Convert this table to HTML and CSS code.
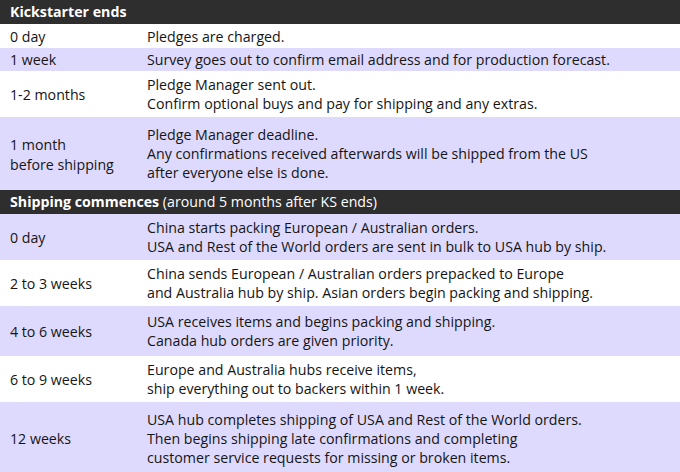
FILE: index.html
```html
<!DOCTYPE html>
<html lang="en">
<head>
<meta charset="utf-8">
<title>Kickstarter timeline</title>
<link rel="stylesheet" href="styles.css">
</head>
<body>
<div class="timeline">
  <div class="head"><b>Kickstarter ends</b></div>
  <div class="row p1"><div class="when">0 day</div><div class="what">Pledges are charged.</div></div>
  <div class="row alt p1b"><div class="when">1 week</div><div class="what">Survey goes out to confirm email address and for production forecast.</div></div>
  <div class="row p2"><div class="when">1-2 months</div><div class="what">Pledge Manager sent out.<br>Confirm optional buys and pay for shipping and any extras.</div></div>
  <div class="row alt p3"><div class="when tall">1 month<br>before shipping</div><div class="what">Pledge Manager deadline.<br>Any confirmations received afterwards will be shipped from the US<br>after everyone else is done.</div></div>
  <div class="head"><b>Shipping commences</b> (around 5 months after KS ends)</div>
  <div class="row alt p2"><div class="when">0 day</div><div class="what">China starts packing European / Australian orders.<br>USA and Rest of the World orders are sent in bulk to USA hub by ship.</div></div>
  <div class="row p2"><div class="when">2 to 3 weeks</div><div class="what">China sends European / Australian orders prepacked to Europe<br>and Australia hub by ship. Asian orders begin packing and shipping.</div></div>
  <div class="row alt p2w"><div class="when">4 to 6 weeks</div><div class="what">USA receives items and begins packing and shipping.<br>Canada hub orders are given priority.</div></div>
  <div class="row p2"><div class="when">6 to 9 weeks</div><div class="what">Europe and Australia hubs receive items,<br>ship everything out to backers within 1 week.</div></div>
  <div class="row alt p3"><div class="when">12 weeks</div><div class="what">USA hub completes shipping of USA and Rest of the World orders.<br>Then begins shipping late confirmations and completing<br>customer service requests for missing or broken items.</div></div>
</div>
</body>
</html>
```
FILE: styles.css
```css
html, body {
  margin: 0;
  padding: 0;
  background: #ffffff;
}
.timeline {
  width: 680px;
  height: 472px;
  overflow: hidden;
  font-family: "Open Sans", "Liberation Sans", sans-serif;
  font-size: 14.2px;
  line-height: 19px;
  color: #151515;
}
.head {
  background: #2e2e2e;
  color: #ffffff;
  height: 24px;
  line-height: 24px;
  padding-left: 10px;
}
.head b {
  font-weight: 700;
}
.row {
  display: flex;
  align-items: center;
  background: #ffffff;
}
.row.alt {
  background: #dedafd;
}
.when {
  width: 137px;
  padding-left: 10px;
  flex-shrink: 0;
}
.when.tall {
  line-height: 20.5px;
  padding-top: 3px;
}
.what {
  flex: 1;
}
.p1 { height: 24px; }
.p1b { height: 23px; }
.p2 { height: 46px; }
.p2w { height: 50px; }
.p3 { height: 73px; }
```
